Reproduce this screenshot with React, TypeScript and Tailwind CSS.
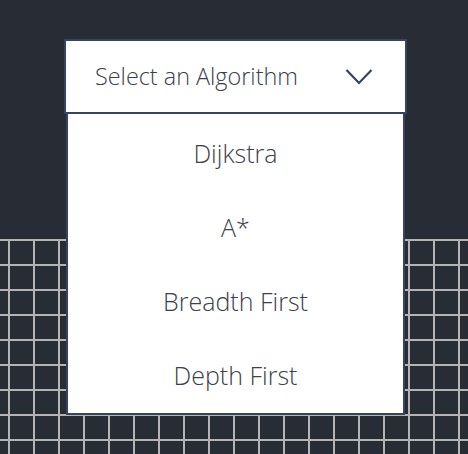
import React from "react";

const ROWS = 9;
const COLS = 20;

export default function App() {
  const cells = Array.from({ length: ROWS * COLS });
  return (
    <div className="relative w-[468px] h-[454px] overflow-hidden bg-[#282c35]" style={{ fontFamily: '"Open Sans", sans-serif' }}>
      <div className="h-[239px]" />
      <div className="ml-[-15px] border-t-2 border-[#b4b4b4] grid grid-cols-[repeat(20,25px)]">
        {cells.map((_, i) => (
          <div key={i} className="box-border h-[25px] w-[25px] border-r-2 border-b-2 border-[#b4b4b4]" />
        ))}
      </div>

      <div className="absolute left-[64px] top-[39px] w-[343px]">
        <div className="box-border h-[75px] border-2 border-[#344466] bg-white flex items-center justify-between pl-[29px] pr-[32px]">
          <span className="text-[23.4px] font-light text-[#3c4049] leading-none mt-[1px]">Select an Algorithm</span>
          <svg width="28" height="18" viewBox="0 0 28 18" fill="none" stroke="#344466" strokeWidth="2.2">
            <path d="M1.5 2 L14 15 L26.5 2" />
          </svg>
        </div>
        <div className="mx-[2px] box-border h-[301px] border-2 border-t-0 border-[#344466] bg-white flex flex-col pt-[3px]">
          {["Dijkstra", "A*", "Breadth First", "Depth First"].map((t) => (
            <div key={t} className="flex-1 flex items-center justify-center text-[25px] font-light text-[#3c4049]">
              {t}
            </div>
          ))}
        </div>
      </div>
    </div>
  );
}
